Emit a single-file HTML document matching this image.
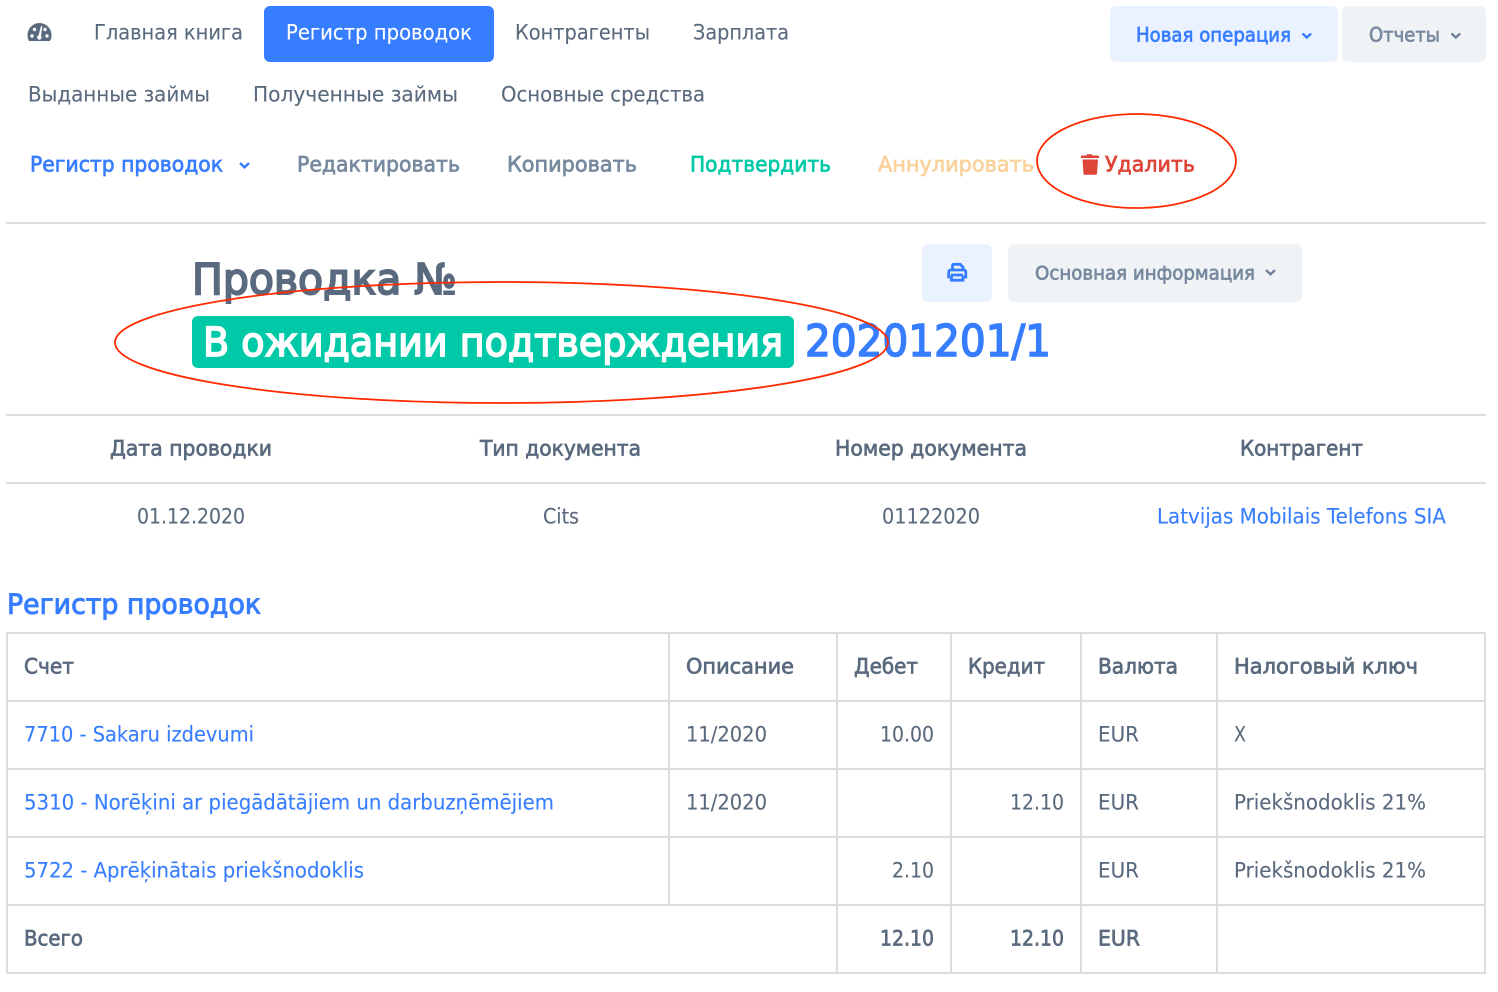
<!DOCTYPE html>
<html lang="ru"><head><meta charset="utf-8"><title>Регистр проводок</title>
<style>
html,body{margin:0;padding:0;background:#fff;width:1498px;height:992px;overflow:hidden}
svg{display:block}
text{font-family:"DejaVu Sans","Liberation Sans",sans-serif;font-size:21px;fill:#5a6a7e;stroke:#5a6a7e;stroke-width:.12px;transform:translateY(-.5px)}
text.b{stroke:#5a6a7e;stroke-width:.7px}
text.l{fill:#377dff;stroke:#377dff;stroke-width:.12px}
text.sb{fill:#377dff;stroke:#377dff;stroke-width:.7px}
text.g{fill:#77899f;stroke:#77899f;stroke-width:.7px}
</style></head><body>
<svg xmlns="http://www.w3.org/2000/svg" width="1498" height="992" viewBox="0 0 1498 992">
<g fill="none">
<rect x="264" y="6" width="230" height="56" rx="6" fill="#377dff"/>
<rect x="1110" y="6" width="228" height="56" rx="6" fill="#ebf2ff"/>
<rect x="1342" y="6" width="144" height="56" rx="6" fill="#f0f3f6"/>
<rect x="922" y="244" width="70" height="58" rx="6" fill="#ebf2ff"/>
<rect x="1008" y="244" width="294" height="58" rx="6" fill="#f0f3f6"/>
<rect x="192" y="316" width="602" height="52" rx="6" fill="#00c9a7"/>
</g>
<path d="M39.500 23a12 12 0 0 0-12 12.500c0 2.300.6 4.200 1.600 5.500h20.800c1-1.300 1.600-3.200 1.600-5.500A12 12 0 0 0 39.500 23z" fill="#5a6a7e"/>
<g fill="#fff"><circle cx="32" cy="36" r="1.700"/><circle cx="34.500" cy="29.500" r="1.700"/><circle cx="47" cy="36" r="1.700"/><circle cx="45" cy="29.500" r="1.700"/><path d="M41 26l1.300.4-1.300 9.400a2.300 2.300 0 1 1-2.400-.6z"/></g>

<text x="94" y="40" textLength="149" lengthAdjust="spacingAndGlyphs">Главная книга</text>
<text x="286" y="40" textLength="186" lengthAdjust="spacingAndGlyphs" style="fill:#fff;stroke:#fff">Регистр проводок</text>
<text x="515" y="40" textLength="135" lengthAdjust="spacingAndGlyphs">Контрагенты</text>
<text x="693" y="40" textLength="96" lengthAdjust="spacingAndGlyphs">Зарплата</text>
<text x="28" y="102" textLength="182" lengthAdjust="spacingAndGlyphs">Выданные займы</text>
<text x="253" y="102" textLength="205" lengthAdjust="spacingAndGlyphs">Полученные займы</text>
<text x="501" y="102" textLength="204" lengthAdjust="spacingAndGlyphs">Основные средства</text>

<text class="sb" x="1136" y="42" textLength="155" lengthAdjust="spacingAndGlyphs" style="font-size:19.500px">Новая операция</text>
<path d="M1302.500 33.500l4.300 4 4.300-4" fill="none" stroke="#377dff" stroke-width="2.400"/>
<text class="g" x="1369" y="42" textLength="71" lengthAdjust="spacingAndGlyphs" style="font-size:19.500px">Отчеты</text>
<path d="M1451.500 33.500l4.300 4 4.300-4" fill="none" stroke="#6f8098" stroke-width="2.400"/>

<text class="sb" x="30" y="172" textLength="193" lengthAdjust="spacingAndGlyphs">Регистр проводок</text>
<path d="M240 163l4.500 4.300 4.500-4.300" fill="none" stroke="#377dff" stroke-width="2.400"/>
<text class="g" x="297" y="172" textLength="163" lengthAdjust="spacingAndGlyphs">Редактировать</text>
<text class="g" x="507" y="172" textLength="130" lengthAdjust="spacingAndGlyphs">Копировать</text>
<text x="690" y="172" textLength="141" lengthAdjust="spacingAndGlyphs" style="fill:#00c9a7;stroke:#00c9a7;stroke-width:.7px">Подтвердить</text>
<text x="878" y="172" textLength="156" lengthAdjust="spacingAndGlyphs" style="fill:#f9d29c;stroke:#f9d29c;stroke-width:.7px">Аннулировать</text>
<path d="M1081 156.500c0-.6.4-1 1-1h4.500l.5-1.200h5l.5 1.200h5.500c.6 0 1 .4 1 1v1.500h-18zM1082.500 159.500h15.500l-1 14c0 .8-.7 1.300-1.400 1.300h-10.600c-.8 0-1.400-.5-1.500-1.300z" fill="#de4437"/>
<text x="1105" y="172" textLength="90" lengthAdjust="spacingAndGlyphs" style="fill:#de4437;stroke:#de4437;stroke-width:.7px">Удалить</text>

<path d="M952.500 270v-4.500c0-.7.500-1.200 1.200-1.200h6.500l2.800 2.800V270M950.500 270h13.500c1 0 1.800.8 1.800 1.800v5.200h-2.800v3.200h-11.500V277h-2.800v-5.200c0-1 .8-1.800 1.800-1.800zM951 275h12" fill="none" stroke="#377dff" stroke-width="2.800"/>
<text class="g" x="1035" y="280" textLength="220" lengthAdjust="spacingAndGlyphs" style="font-size:18.500px">Основная информация</text>
<path d="M1266 270l4.500 4.300 4.500-4.300" fill="none" stroke="#6f8098" stroke-width="2.400"/>

<text x="192" y="294.500" textLength="265" lengthAdjust="spacingAndGlyphs" style="font-size:42.500px;stroke:#5a6a7e;stroke-width:1.900px">Проводка №</text>
<text x="203" y="356.500" textLength="580" lengthAdjust="spacingAndGlyphs" style="font-size:40.500px;fill:#fff;stroke:#fff;stroke-width:1.700px">В ожидании подтверждения</text>
<text x="805" y="356.500" textLength="246" lengthAdjust="spacingAndGlyphs" style="font-size:44px;fill:#377dff;stroke:#377dff;stroke-width:1.600px">20201201/1</text>

<g fill="#dedede">
<rect x="6" y="222" width="1480" height="2"/>
<rect x="6" y="414" width="1480" height="2"/>
<rect x="6" y="482" width="1480" height="2"/>
</g>

<text class="b" x="110" y="456" textLength="162" lengthAdjust="spacingAndGlyphs">Дата проводки</text>
<text class="b" x="480" y="456" textLength="161" lengthAdjust="spacingAndGlyphs">Тип документа</text>
<text class="b" x="835" y="456" textLength="192" lengthAdjust="spacingAndGlyphs">Номер документа</text>
<text class="b" x="1240" y="456" textLength="123" lengthAdjust="spacingAndGlyphs">Контрагент</text>
<text x="137" y="524" textLength="108" lengthAdjust="spacingAndGlyphs">01.12.2020</text>
<text x="543" y="524" textLength="36" lengthAdjust="spacingAndGlyphs">Cits</text>
<text x="882" y="524" textLength="98" lengthAdjust="spacingAndGlyphs">01122020</text>
<text class="l" x="1157" y="524" textLength="289" lengthAdjust="spacingAndGlyphs">Latvijas Mobilais Telefons SIA</text>

<text class="sb" x="7" y="614" textLength="254" lengthAdjust="spacingAndGlyphs" style="font-size:27.500px;stroke-width:.95px">Регистр проводок</text>

<g fill="#dedede">
<rect x="6" y="632" width="1480" height="2"/>
<rect x="6" y="700" width="1480" height="2"/>
<rect x="6" y="768" width="1480" height="2"/>
<rect x="6" y="836" width="1480" height="2"/>
<rect x="6" y="904" width="1480" height="2"/>
<rect x="6" y="972" width="1480" height="2"/>
<rect x="6" y="632" width="2" height="342"/>
<rect x="668" y="632" width="2" height="274"/>
<rect x="836" y="632" width="2" height="342"/>
<rect x="950" y="632" width="2" height="342"/>
<rect x="1080" y="632" width="2" height="342"/>
<rect x="1216" y="632" width="2" height="342"/>
<rect x="1484" y="632" width="2" height="342"/>
</g>

<text class="b" x="24" y="674" textLength="50" lengthAdjust="spacingAndGlyphs">Счет</text>
<text class="b" x="686" y="674" textLength="108" lengthAdjust="spacingAndGlyphs">Описание</text>
<text class="b" x="854" y="674" textLength="64" lengthAdjust="spacingAndGlyphs">Дебет</text>
<text class="b" x="968" y="674" textLength="77" lengthAdjust="spacingAndGlyphs">Кредит</text>
<text class="b" x="1098" y="674" textLength="80" lengthAdjust="spacingAndGlyphs">Валюта</text>
<text class="b" x="1234" y="674" textLength="184" lengthAdjust="spacingAndGlyphs">Налоговый ключ</text>

<text class="l" x="24" y="742" textLength="230" lengthAdjust="spacingAndGlyphs">7710 - Sakaru izdevumi</text>
<text x="686" y="742" textLength="81" lengthAdjust="spacingAndGlyphs">11/2020</text>
<text x="880" y="742" textLength="54" lengthAdjust="spacingAndGlyphs">10.00</text>
<text x="1098" y="742" textLength="41" lengthAdjust="spacingAndGlyphs">EUR</text>
<text x="1234" y="742" textLength="12" lengthAdjust="spacingAndGlyphs">X</text>

<text class="l" x="24" y="810" textLength="530" lengthAdjust="spacingAndGlyphs">5310 - Norēķini ar piegādātājiem un darbuzņēmējiem</text>
<text x="686" y="810" textLength="81" lengthAdjust="spacingAndGlyphs">11/2020</text>
<text x="1010" y="810" textLength="54" lengthAdjust="spacingAndGlyphs">12.10</text>
<text x="1098" y="810" textLength="41" lengthAdjust="spacingAndGlyphs">EUR</text>
<text x="1234" y="810" textLength="192" lengthAdjust="spacingAndGlyphs">Priekšnodoklis 21%</text>

<text class="l" x="24" y="878" textLength="340" lengthAdjust="spacingAndGlyphs">5722 - Aprēķinātais priekšnodoklis</text>
<text x="892" y="878" textLength="42" lengthAdjust="spacingAndGlyphs">2.10</text>
<text x="1098" y="878" textLength="41" lengthAdjust="spacingAndGlyphs">EUR</text>
<text x="1234" y="878" textLength="192" lengthAdjust="spacingAndGlyphs">Priekšnodoklis 21%</text>

<text class="b" x="24" y="946" textLength="59" lengthAdjust="spacingAndGlyphs">Всего</text>
<text class="b" x="880" y="946" textLength="54" lengthAdjust="spacingAndGlyphs">12.10</text>
<text class="b" x="1010" y="946" textLength="54" lengthAdjust="spacingAndGlyphs">12.10</text>
<text class="b" x="1098" y="946" textLength="42" lengthAdjust="spacingAndGlyphs">EUR</text>

<ellipse cx="1136.500" cy="161" rx="99.500" ry="47" fill="none" stroke="#ff2a00" stroke-width="1.800"/>
<ellipse cx="501.500" cy="342.500" rx="386.500" ry="60.500" fill="none" stroke="#ff2a00" stroke-width="1.800"/>
</svg>
</body></html>
